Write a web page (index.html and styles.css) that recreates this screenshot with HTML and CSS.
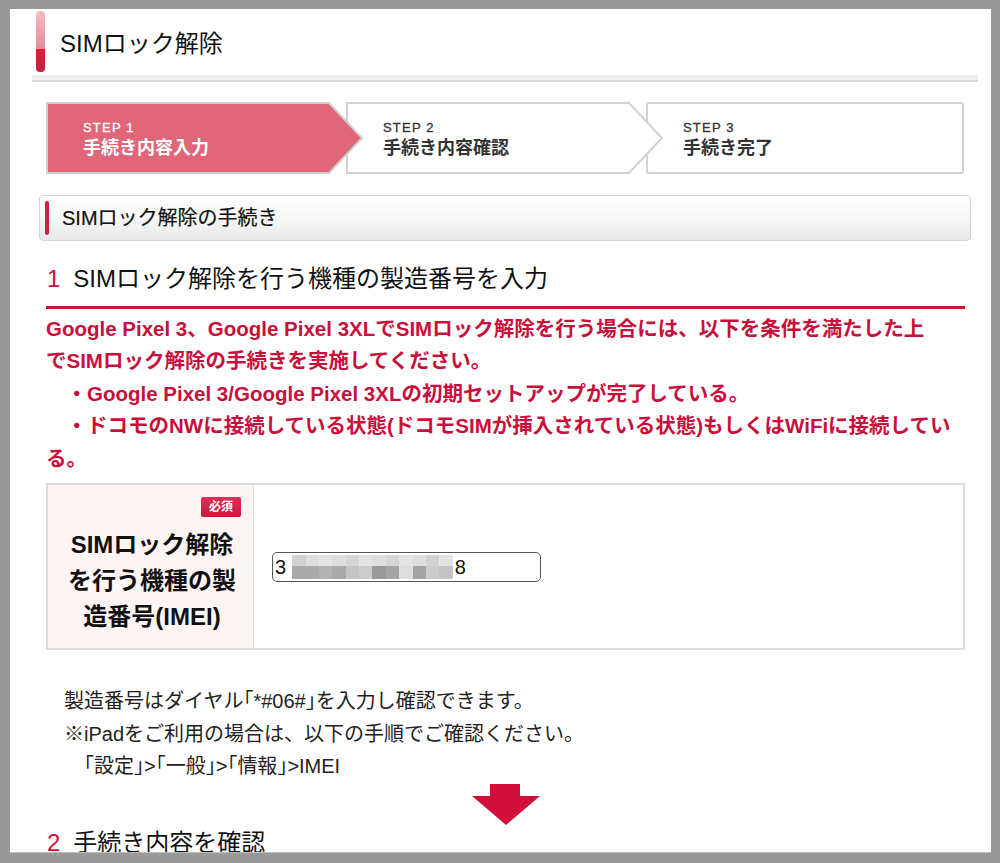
FILE: index.html
```html
<!DOCTYPE html>
<html lang="ja">
<head>
<meta charset="utf-8">
<title>SIMロック解除</title>
<link rel="stylesheet" href="styles.css">
</head>
<body>
<div class="panel">
  <div class="page-head">
    <span class="page-bar"></span>
    <h1 class="page-title">SIMロック解除</h1>
  </div>
  <div class="sep"></div>

  <div class="steps">
    <div class="step step-1">
      <svg class="step-bg" viewBox="0 0 318 72" width="318" height="72"><polygon points="1,1 283,1 316,36 283,71 1,71" fill="#e0677a" stroke="#cfcfcf" stroke-width="2"/></svg>
      <div class="step-text"><div class="step-no">STEP 1</div><div class="step-name">手続き内容入力</div></div>
    </div>
    <div class="step step-2">
      <svg class="step-bg" viewBox="0 0 318 72" width="318" height="72"><polygon points="1,1 283,1 316,36 283,71 1,71" fill="#ffffff" stroke="#d2d2d2" stroke-width="2"/></svg>
      <div class="step-text"><div class="step-no">STEP 2</div><div class="step-name">手続き内容確認</div></div>
    </div>
    <div class="step step-3">
      <svg class="step-bg" viewBox="0 0 318 72" width="318" height="72"><rect x="1" y="1" width="316" height="70" rx="2" fill="#ffffff" stroke="#d2d2d2" stroke-width="2"/></svg>
      <div class="step-text"><div class="step-no">STEP 3</div><div class="step-name">手続き完了</div></div>
    </div>
  </div>

  <div class="sec-box">
    <span class="sec-bar"></span>
    <h2 class="sec-title">SIMロック解除の手続き</h2>
  </div>

  <h3 class="num-head"><span class="num">1</span>SIMロック解除を行う機種の製造番号を入力</h3>
  <p class="alert">Google Pixel 3、Google Pixel 3XLでSIMロック解除を行う場合には、以下を条件を満たした上<br>でSIMロック解除の手続きを実施してください。<br>　・Google Pixel 3/Google Pixel 3XLの初期セットアップが完了している。<br>　・ドコモのNWに接続している状態(ドコモSIMが挿入されている状態)もしくはWiFiに接続してい<br>る。</p>

  <div class="form-table">
    <div class="th">
      <div class="badge-row"><span class="badge">必須</span></div>
      <div class="th-label">SIMロック解除を行う機種の製造番号(IMEI)</div>
    </div>
    <div class="td">
      <div class="field">
        <span class="digit">3</span>
        <div class="blur">
          <i class="c1"></i><i class="c2"></i><i class="c3"></i><i class="c2"></i><i class="c4"></i><i class="c3"></i><i class="c2"></i><i class="c4"></i><i class="c3"></i><i class="c2"></i><i class="c1"></i><i class="c3"></i>
          <i class="d1"></i><i class="d1"></i><i class="d2"></i><i class="d1"></i><i class="d3"></i><i class="d4"></i><i class="d5"></i><i class="d6"></i><i class="d7"></i><i class="d6"></i><i class="d4"></i><i class="d3"></i>
        </div>
        <span class="digit">8</span>
      </div>
    </div>
  </div>

  <div class="notes">
    <p>製造番号はダイヤル<span class="hb">「</span>*#06#<span class="hb">」</span>を入力し確認できます。</p>
    <p>※iPadをご利用の場合は、以下の手順でご確認ください。</p>
    <p>　<span class="hb">「</span>設定<span class="hb">」</span>&gt;<span class="hb">「</span>一般<span class="hb">」</span>&gt;<span class="hb">「</span>情報<span class="hb">」</span>&gt;IMEI</p>
  </div>

  <div class="down">
    <svg width="68" height="41" viewBox="0 0 68 41"><polygon points="18,0 48,0 48,12 68,12 34,41 0,12 18,12" fill="#d0103a"/></svg>
  </div>

  <h3 class="num-head num-head-2"><span class="num">2</span>手続き内容を確認</h3>
</div>
</body>
</html>
```

FILE: styles.css
```css
html, body {
  margin: 0;
  padding: 0;
}
body {
  background: #999999;
  font-family: "Liberation Sans", "Noto Sans CJK JP", sans-serif;
  color: #222222;
  width: 1000px;
  height: 863px;
  overflow: hidden;
}
.panel {
  margin: 9px 9px 0 10px;
  width: 981px;
  height: 844px;
  background: #ffffff;
  overflow: hidden;
  border-bottom: 1px solid #bdbdbd;
  box-sizing: border-box;
}
p, h1, h2, h3 {
  margin: 0;
  font-weight: normal;
}

/* page header */
.page-head {
  display: flex;
  align-items: center;
  margin: 2px 0 0 26px;
  height: 61px;
  gap: 15px;
}
.page-bar {
  width: 9px;
  height: 61px;
  border-radius: 4px;
  background: linear-gradient(#f4bdc7 0%, #e58a9a 62%, #d1253f 62%, #c91d39 100%);
}
.page-title {
  font-size: 24px;
  line-height: 30px;
  padding-top: 4px;
  color: #111;
}
.sep {
  margin: 3px 0 0 22px;
  width: 946px;
  height: 5px;
  background: #f0f0f0;
  border-bottom: 2px solid #dadada;
}

/* steps */
.steps {
  display: flex;
  margin: 20px 0 0 36px;
}
.step {
  display: grid;
  width: 318px;
  height: 72px;
}
.step > * {
  grid-area: 1 / 1;
}
.step-1 { z-index: 3; }
.step-2 { z-index: 2; margin-left: -18px; }
.step-3 { z-index: 1; margin-left: -18px; }
.step-bg {
  display: block;
}
.step-text {
  padding: 18px 0 0 37px;
  color: #333;
}
.step-1 .step-text {
  color: #ffffff;
}
.step-no {
  font-size: 13px;
  line-height: 16px;
  letter-spacing: 1.2px;
  -webkit-text-stroke: 0.3px currentColor;
}
.step-name {
  font-size: 18px;
  line-height: 24px;
  font-weight: bold;
}

/* section box */
.sec-box {
  display: flex;
  align-items: center;
  margin: 21px 0 0 29px;
  width: 932px;
  height: 46px;
  box-sizing: border-box;
  border: 1px solid #d4d4d4;
  border-radius: 4px;
  background: linear-gradient(#ffffff 0%, #f8f8f8 45%, #e9e9e9 100%);
  padding-left: 5px;
  gap: 13px;
}
.sec-bar {
  width: 4px;
  height: 34px;
  border-radius: 2px;
  background: #d0213f;
}
.sec-title {
  font-size: 20px;
  line-height: 26px;
  color: #111;
  -webkit-text-stroke: 0.2px #111;
}

/* numbered heading */
.num-head {
  margin: 20px 0 0 36px;
  width: 919px;
  font-size: 24px;
  line-height: 36px;
  padding-bottom: 9px;
  border-bottom: 3px solid #cf1238;
  color: #111;
}
.num {
  color: #cf1238;
  margin-right: 13px;
  margin-left: 1px;
}
.num-head-2 {
  margin-top: 0;
}

/* alert */
.alert {
  margin: 4px 0 0 36px;
  width: 919px;
  font-size: 20.5px;
  line-height: 32.4px;
  font-weight: bold;
  color: #c90f3b;
}

/* form table */
.form-table {
  display: flex;
  margin: 8px 0 0 36px;
  width: 919px;
  height: 167px;
  box-sizing: border-box;
  border: 2px solid #dcdcdc;
}
.th {
  width: 206px;
  background: #fdf4f4;
  border-right: 1px solid #dcdcdc;
  padding: 12px 12px 14px 0;
  box-sizing: border-box;
}
.badge-row {
  display: flex;
  justify-content: flex-end;
}
.badge {
  display: block;
  width: 40px;
  height: 20px;
  line-height: 20px;
  text-align: center;
  background: linear-gradient(#dc3158, #c8173f);
  border-radius: 2px;
  color: #fff;
  font-size: 12px;
  font-weight: bold;
}
.th-label {
  width: 176px;
  margin: 10px 0 0 16px;
  font-size: 24px;
  line-height: 36px;
  font-weight: bold;
  text-align: center;
  color: #111;
}
.td {
  flex: 1;
  display: flex;
  align-items: center;
  padding-left: 18px;
}
.field {
  display: flex;
  align-items: center;
  width: 269px;
  height: 30px;
  box-sizing: border-box;
  border: 1px solid #555;
  border-radius: 5px;
  padding-left: 2px;
  font-size: 20px;
}
.digit {
  line-height: 28px;
  color: #111;
}
.blur {
  display: grid;
  grid-template-columns: repeat(12, 13.4px);
  grid-template-rows: 11px 13px;
  margin: 0 2px 0 6px;
}
.blur i { display: block; }
.c1 { background: #d2d2d2; }
.c2 { background: #dedede; }
.c3 { background: #e4e4e4; }
.c4 { background: #d6d6d6; }
.d1 { background: #aaaaaa; }
.d2 { background: #b2b2b2; }
.d3 { background: #c4c4c4; }
.d4 { background: #cccccc; }
.d5 { background: #9a9a9a; }
.d6 { background: #a4a4a4; }
.d7 { background: #dddddd; }

/* notes */
.notes {
  margin: 35px 0 0 54px;
  font-size: 20px;
  line-height: 32.5px;
  color: #222;
}
.hb {
  font-feature-settings: "halt";
}

/* arrow */
.down {
  display: flex;
  justify-content: center;
  margin: 1px 0 0 36px;
  width: 919px;
  height: 41px;
}
.down svg {
  display: block;
}
```
